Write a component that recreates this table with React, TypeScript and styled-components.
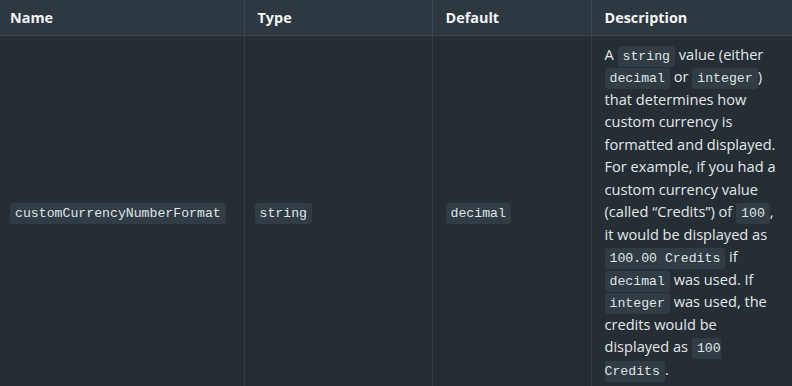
import React from "react";
import styled, { createGlobalStyle } from "styled-components";

const Global = createGlobalStyle`
  html, body {
    margin: 0;
    padding: 0;
    background: #252e34;
  }
  body {
    font-family: "Open Sans", "DejaVu Sans", sans-serif;
    color: #e3e7ea;
    overflow: hidden;
  }
`;

const Table = styled.table`
  width: 792px;
  border-collapse: collapse;
  table-layout: fixed;
  font-size: 14.6px;
`;

const HeadCell = styled.th<{ $w: number; $pl?: number }>`
  box-sizing: border-box;
  width: ${(p) => p.$w}px;
  height: 35px;
  padding: 0 10px 0 ${(p) => p.$pl ?? 13}px;
  text-align: left;
  font-size: 14.4px;
  font-weight: 700;
  color: #f4f6f7;
  background: #2e3840;
  border-right: 1px solid #3a454d;
  border-bottom: 1px solid #3a454d;
  &:last-child {
    border-right: none;
  }
`;

const Cell = styled.td<{ $pl?: number }>`
  padding: 7px 10px 12px ${(p) => p.$pl ?? 13}px;
  vertical-align: middle;
  border-right: 1px solid #343e46;
  line-height: 22.5px;
  &:last-child {
    border-right: none;
    padding-right: 12px;
  }
`;

const Code = styled.code`
  font-family: "Liberation Mono", "DejaVu Sans Mono", monospace;
  font-size: 13.2px;
  line-height: 1;
  color: #dfe4e7;
  background: #323c44;
  border-radius: 3px;
  padding: 3px 5px;
`;

export default function App() {
  return (
    <>
      <Global />
      <Table>
        <thead>
          <tr>
            <HeadCell $w={244} $pl={10}>Name</HeadCell>
            <HeadCell $w={188}>Type</HeadCell>
            <HeadCell $w={159}>Default</HeadCell>
            <HeadCell $w={201}>Description</HeadCell>
          </tr>
        </thead>
        <tbody>
          <tr>
            <Cell $pl={10}>
              <Code>customCurrencyNumberFormat</Code>
            </Cell>
            <Cell $pl={10}>
              <Code>string</Code>
            </Cell>
            <Cell>
              <Code>decimal</Code>
            </Cell>
            <Cell>
              A <Code>string</Code> value (either <Code>decimal</Code> or{" "}
              <Code>integer</Code>) that determines how custom currency is
              formatted and displayed. For example, if you had a custom
              currency value (called “Credits”) of <Code>100</Code>, it would be
              displayed as <Code>100.00 Credits</Code> if <Code>decimal</Code>{" "}
              was used. If <Code>integer</Code> was used, the credits would be
              displayed as <Code>100 Credits</Code>.
            </Cell>
          </tr>
        </tbody>
      </Table>
    </>
  );
}
